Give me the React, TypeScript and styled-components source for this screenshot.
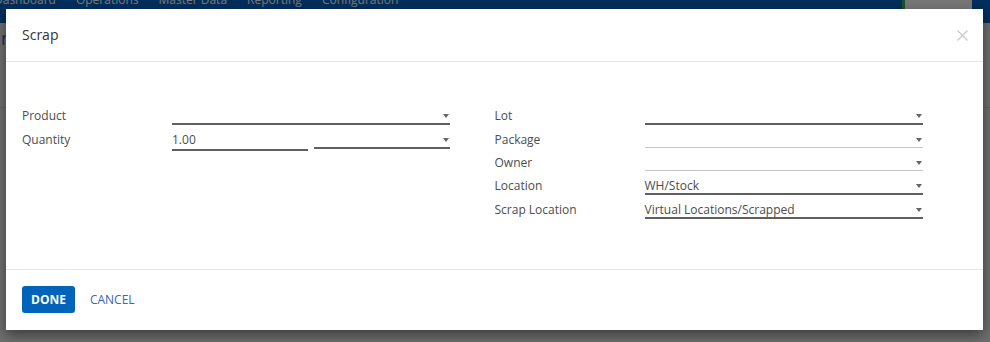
import React from 'react';
import styled, { createGlobalStyle } from 'styled-components';

const GlobalStyle = createGlobalStyle`
  html, body {
    margin: 0;
    padding: 0;
  }
  body {
    width: 990px;
    height: 342px;
    overflow: hidden;
    font-family: "Open Sans", "Noto Sans", sans-serif;
    background: #d9d9d9;
  }
`;

const Page = styled.div`
  position: relative;
  width: 990px;
  height: 342px;
  overflow: hidden;
  background: #dcdcdc;
`;

const Navbar = styled.div`
  display: flex;
  align-items: flex-start;
  height: 23px;
  background: #005cb8;
  padding-right: 18px;
`;

const Menu = styled.div`
  display: flex;
  gap: 20px;
  margin-left: -6px;
  margin-top: -8px;
  flex: 1;
`;

const MenuItem = styled.span`
  color: #f2f2f2;
  font-size: 12px;
  line-height: 16px;
`;

const UserBox = styled.div`
  display: flex;
  height: 18px;
  margin-top: -2px;
`;

const UserAccent = styled.div`
  width: 3px;
  background: #3fa34d;
`;

const UserName = styled.div`
  width: 67px;
  background: #efefef;
`;

const ControlPanel = styled.div`
  padding: 4px 0 0 8px;
  border-bottom: 1px solid #c8c8c8;
  height: 80px;
`;

const Breadcrumb = styled.div`
  color: #2a63b8;
  font-size: 18px;
  line-height: 22px;
  margin-left: -12px;
`;

const Backdrop = styled.div`
  position: absolute;
  inset: 0;
  background: rgba(0, 0, 0, 0.5);
`;

const Dialog = styled.div`
  position: absolute;
  top: 9px;
  left: 6px;
  width: 977px;
  background: #fff;
  box-shadow: 0 5px 12px rgba(0, 0, 0, 0.45);
  display: flex;
  flex-direction: column;
`;

const Header = styled.div`
  display: flex;
  align-items: center;
  justify-content: space-between;
  padding: 15px 15px 15px 16px;
  border-bottom: 1px solid #e5e5e5;
`;

const Title = styled.h4`
  margin: 0;
  font-size: 14px;
  line-height: 22px;
  font-weight: 400;
  color: #333;
`;

const CloseButton = styled.button`
  border: none;
  background: none;
  padding: 0;
  width: 11px;
  height: 11px;
  display: flex;
  cursor: pointer;
`;

const Body = styled.div`
  display: flex;
  padding: 46px 16px 50px;
`;

const Group = styled.div`
  width: 473px;
  display: flex;
  flex-direction: column;
  gap: 7px;
`;

const FieldRow = styled.div`
  display: grid;
  grid-template-columns: 150px 278px;
  align-items: start;
`;

const Label = styled.label`
  font-size: 12px;
  line-height: 15px;
  color: #4c4c4c;
`;

const Field = styled.div<{ $required?: boolean; $extra?: number }>`
  display: flex;
  align-items: center;
  height: 15px;
  padding-bottom: ${p => p.$extra ?? 0}px;
  border-bottom: ${p => (p.$required ? '2px solid #5f5f5f' : '1px solid #c6c6c6')};
  font-size: 12px;
  line-height: 15px;
  color: #4c4c4c;
`;

const Split = styled.div`
  display: grid;
  grid-template-columns: 136px 136px;
  gap: 6px;
  align-items: start;
`;

const Caret = styled.span`
  margin-left: auto;
  margin-right: 1px;
  width: 0;
  height: 0;
  border-left: 3.5px solid transparent;
  border-right: 3.5px solid transparent;
  border-top: 4px solid #666;
`;

const Footer = styled.div`
  display: flex;
  align-items: center;
  gap: 6px;
  padding: 16px 16px 17px;
  border-top: 1px solid #e5e5e5;
`;

const PrimaryButton = styled.button`
  height: 27px;
  padding: 0 9px;
  border: none;
  border-radius: 3px;
  background: #0263bb;
  color: #fff;
  font-family: inherit;
  font-size: 12px;
  font-weight: 700;
  cursor: pointer;
`;

const LinkButton = styled.button`
  height: 27px;
  padding: 0 9px;
  border: none;
  background: none;
  color: #3666b8;
  font-family: inherit;
  font-size: 12px;
  cursor: pointer;
`;

type FieldDef = {
  label: string;
  value?: string;
  required?: boolean;
};

const rightFields: FieldDef[] = [
  { label: 'Lot', required: true },
  { label: 'Package' },
  { label: 'Owner' },
  { label: 'Location', value: 'WH/Stock', required: true },
  { label: 'Scrap Location', value: 'Virtual Locations/Scrapped', required: true },
];

const SelectField: React.FC<{ value?: string; required?: boolean }> = ({ value, required }) => (
  <Field $required={required}>
    {value}
    <Caret />
  </Field>
);

export default function App() {
  return (
    <>
      <GlobalStyle />
      <Page>
        <Navbar>
          <Menu>
            <MenuItem>Dashboard</MenuItem>
            <MenuItem>Operations</MenuItem>
            <MenuItem>Master Data</MenuItem>
            <MenuItem>Reporting</MenuItem>
            <MenuItem>Configuration</MenuItem>
          </Menu>
          <UserBox>
            <UserAccent />
            <UserName />
          </UserBox>
        </Navbar>
        <ControlPanel>
          <Breadcrumb>Inventory</Breadcrumb>
        </ControlPanel>
        <Backdrop />
        <Dialog role="dialog">
          <Header>
            <Title>Scrap</Title>
            <CloseButton aria-label="Close">
              <svg width="11" height="11" viewBox="0 0 11 11">
                <path d="M0.5 0.5 L10.5 10.5 M10.5 0.5 L0.5 10.5" stroke="#c9c9c9" strokeWidth="1.3" />
              </svg>
            </CloseButton>
          </Header>
          <Body>
            <Group>
              <FieldRow>
                <Label>Product</Label>
                <SelectField required />
              </FieldRow>
              <FieldRow>
                <Label>Quantity</Label>
                <Split>
                  <Field $required $extra={2}>1.00</Field>
                  <SelectField required />
                </Split>
              </FieldRow>
            </Group>
            <Group>
              {rightFields.map(f => (
                <FieldRow key={f.label}>
                  <Label>{f.label}</Label>
                  <SelectField value={f.value} required={f.required} />
                </FieldRow>
              ))}
            </Group>
          </Body>
          <Footer>
            <PrimaryButton>DONE</PrimaryButton>
            <LinkButton>CANCEL</LinkButton>
          </Footer>
        </Dialog>
      </Page>
    </>
  );
}
